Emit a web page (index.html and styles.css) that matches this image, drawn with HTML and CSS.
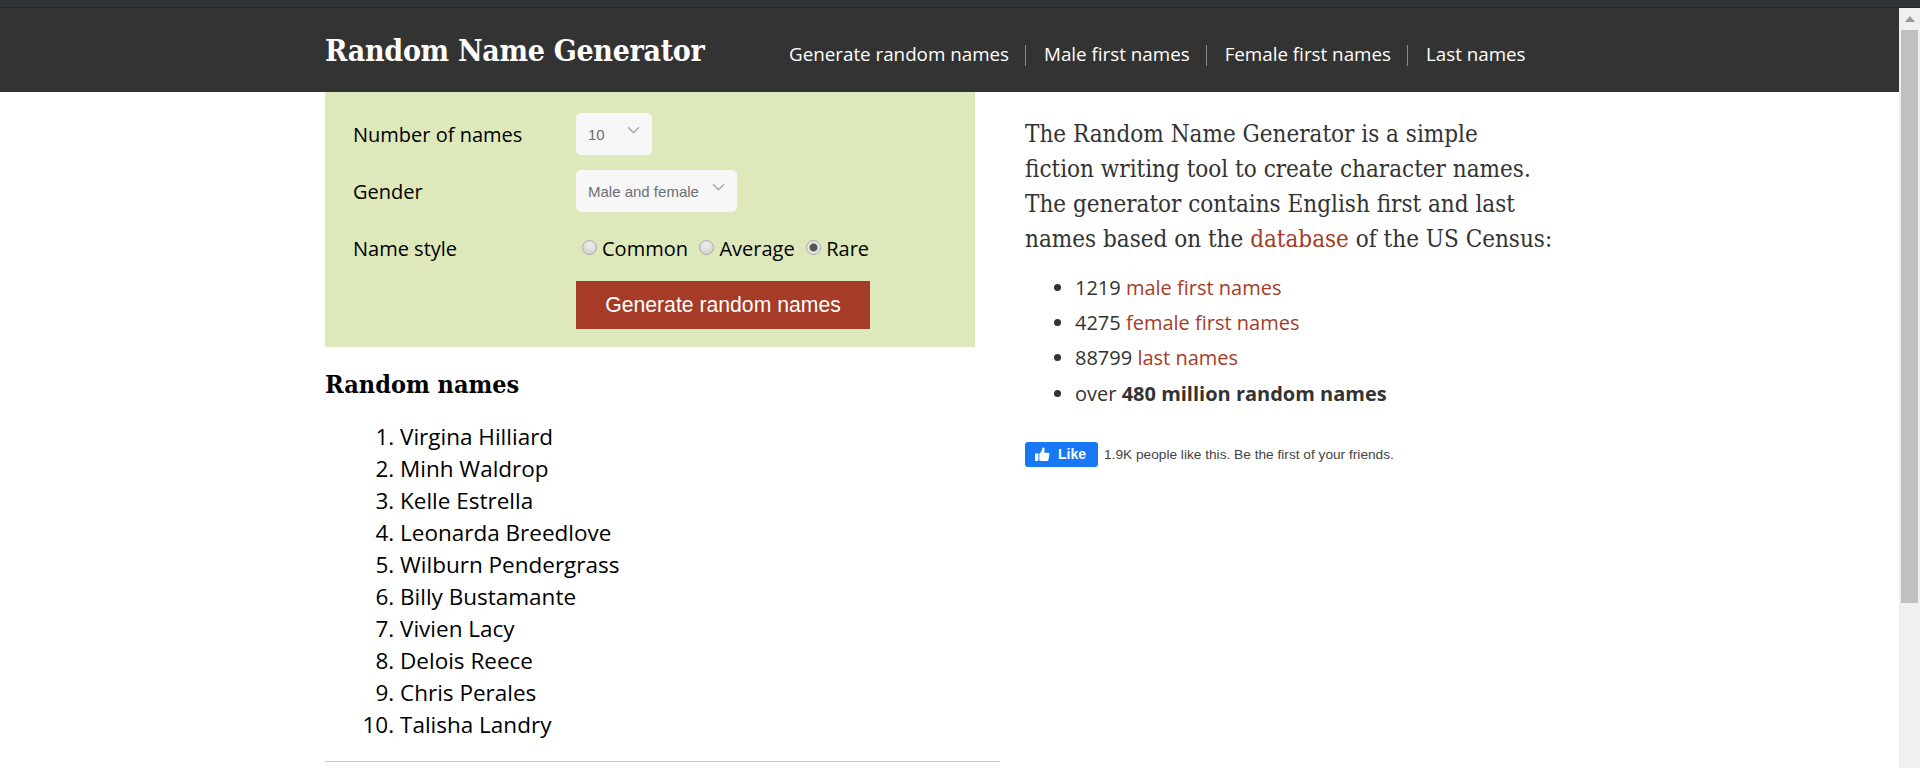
FILE: index.html
```html
<!DOCTYPE html>
<html lang="en">
<head>
<meta charset="utf-8">
<title>Random Name Generator</title>
<link rel="stylesheet" href="styles.css">
</head>
<body>
<div class="topstrip"></div>
<div class="window">
  <div class="page">
    <header class="site-header">
      <div class="wrap header-row">
        <h1 class="brand">Random Name Generator</h1>
        <nav class="nav">
          <a href="#">Generate random names</a>
          <a href="#">Male first names</a>
          <a href="#">Female first names</a>
          <a href="#">Last names</a>
        </nav>
      </div>
    </header>
    <main class="wrap columns">
      <section class="left">
        <form class="panel">
          <label class="lbl">Number of names</label>
          <div class="ctl">
            <span class="selbox sel-a"><span class="seltext">10</span>
              <svg class="chev" viewBox="0 0 12 8"><path d="M1 1l5 5 5-5" fill="none" stroke="#aaa" stroke-width="1.4"/></svg></span>
          </div>
          <label class="lbl">Gender</label>
          <div class="ctl">
            <span class="selbox sel-b"><span class="seltext">Male and female</span>
              <svg class="chev" viewBox="0 0 12 8"><path d="M1 1l5 5 5-5" fill="none" stroke="#aaa" stroke-width="1.4"/></svg></span>
          </div>
          <label class="lbl">Name style</label>
          <div class="ctl radios">
            <label class="radio r1"><input type="radio" name="style">Common</label>
            <label class="radio r2"><input type="radio" name="style">Average</label>
            <label class="radio"><input type="radio" name="style" checked>Rare</label>
          </div>
          <div></div>
          <button type="button" class="go">Generate random names</button>
        </form>
        <h3 class="names-title">Random names</h3>
        <ol class="names">
          <li>Virgina Hilliard</li>
          <li>Minh Waldrop</li>
          <li>Kelle Estrella</li>
          <li>Leonarda Breedlove</li>
          <li>Wilburn Pendergrass</li>
          <li>Billy Bustamante</li>
          <li>Vivien Lacy</li>
          <li>Delois Reece</li>
          <li>Chris Perales</li>
          <li>Talisha Landry</li>
        </ol>
        <hr class="rule">
      </section>
      <aside class="right">
        <p class="intro"><span class="line">The Random Name Generator is a simple</span><span class="line">fiction writing tool to create character names.</span><span class="line">The generator contains English first and last</span><span class="line">names based on the <a href="#">database</a> of the US Census:</span></p>
        <ul class="facts">
          <li>1219 <a href="#">male first names</a></li>
          <li>4275 <a href="#">female first names</a></li>
          <li>88799 <a href="#">last names</a></li>
          <li>over <b>480 million random names</b></li>
        </ul>
        <div class="fb">
          <span class="fb-btn">
            <svg class="thumb" viewBox="0 0 16 16"><path d="M0 7h3.6v8H0zM4.6 7.2c1.500-1 2.700-2.900 3-5 .1-1 .5-1.700 1.200-1.700 1.200 0 1.700 1.300 1.500 2.800l-.5 2.700h4.100c1 0 1.600.7 1.500 1.500l-1 6c-.1.800-.8 1.500-1.700 1.500H7c-.9 0-1.700-.3-2.400-.8z" fill="#fff"/></svg>
            <span>Like</span>
          </span>
          <span class="fb-text">1.9K people like this. Be the first of your friends.</span>
        </div>
      </aside>
    </main>
  </div>
  <div class="scrollbar">
    <div class="sb-btn"><svg viewBox="0 0 10 6" class="sb-arrow"><path d="M5 0l5 6H0z" fill="#999"/></svg></div>
    <div class="sb-thumb"></div>
  </div>
</div>
</body>
</html>
```
FILE: styles.css
```css
* { box-sizing: border-box; }
html, body { margin: 0; height: 100%; overflow: hidden; background: #fff; }
body { font-family: "Open Sans", sans-serif; color: #000; display: flex; flex-direction: column; }
a { text-decoration: none; }

.topstrip { height: 8px; background: #2f3538; border-bottom: 1px solid #26292b; flex: none; }
.window { flex: 1; display: flex; min-height: 0; }
.page { flex: 1; min-width: 0; overflow: hidden; }

.scrollbar { width: 21px; background: #f0f0f0; flex: none; }
.sb-btn { height: 22px; display: flex; align-items: center; justify-content: center; }
.sb-arrow { width: 10px; height: 6px; }
.sb-thumb { width: 17px; height: 573px; margin-left: 2px; background: #c0c0c0; }

.wrap { width: 1574px; padding-left: 325px; }
.site-header { height: 84px; background: #333; }
.header-row { display: flex; align-items: center; height: 100%; }
.brand { margin: 0; width: 464px; font-family: "DejaVu Serif", serif; font-stretch: condensed; font-weight: 700; font-size: 30px; color: #fff; letter-spacing: -.3px; white-space: nowrap; }
.nav { display: flex; font-size: 18.8px; padding-top: 8px; }
.nav a { color: #fff; white-space: nowrap; padding-right: 17px; margin-right: 18px; position: relative; }
.nav a:not(:last-child)::after { content: ""; position: absolute; right: 0; top: 4px; height: 21px; width: 1px; background: #8a8a8a; }

.columns { display: flex; }
.left { width: 675px; flex: none; }
.panel { width: 650px; height: 255px; background-color: #dde8bb; background-image: radial-gradient(circle, #d9e7bb 0 .5px, transparent .8px); background-size: 8px 8px; padding: 21px 0 18px 28px; display: grid; grid-template-columns: 223px 1fr; grid-template-rows: 42px 42px 42px 48px; row-gap: 15px; align-items: center; }
.lbl { font-size: 20px; color: #000; }
.ctl { display: flex; }
.selbox { height: 42px; background: #f7f7f7; border-radius: 5px; position: relative; display: flex; align-items: center; padding-left: 12px; font-family: "Liberation Sans", sans-serif; font-size: 15px; color: #6b6f76; }
.sel-a { width: 76px; }
.sel-b { width: 161px; }
.chev { position: absolute; right: 12px; top: 13px; width: 13px; height: 9px; }
.radios { align-items: center; font-size: 20px; padding-left: 6px; gap: 11.5px; }
.radio { display: flex; align-items: center; }
.radio input { appearance: none; margin: 0 5px 2px 0; width: 15px; height: 15px; border-radius: 50%; border: 1px solid #aaa; background: radial-gradient(circle at 50% 30%, #f0f0f0, #ccc); }
.radio input:checked { background: radial-gradient(circle, #555 0 3.5px, #e6e6e6 4.5px); }
.go { width: 294px; height: 48px; border: 0; background: #a63c28; color: #fff; font-family: "Liberation Sans", sans-serif; font-size: 21.2px; padding: 0; position: relative; top: -3px; }

.names-title { margin: 21px 0 0; font-family: "DejaVu Serif", serif; font-stretch: condensed; font-size: 25px; font-weight: 700; line-height: 34px; color: #000; }
.names { margin: 19px 0 0; padding: 0 0 0 75px; font-size: 22.5px; line-height: 32px; }
.rule { margin: 20px 0 0; border: 0; border-top: 1px solid #ccc; }

.right { width: 540px; flex: none; margin-left: 25px; margin-top: 25px; color: #333; }
.intro { margin: 0; font-family: "DejaVu Serif", serif; font-stretch: condensed; font-size: 24px; line-height: 35px; }
.line { display: block; white-space: nowrap; }
.intro a, .facts a { color: #a63c28; }
.facts { margin: 13px 0 0; padding: 0 0 0 50px; font-size: 20px; line-height: 35.2px; }
.fb { display: flex; align-items: center; margin-top: 31px; }
.fb-btn { width: 73px; height: 25px; background: #1877f2; border-radius: 3px; color: #fff; font-family: "Liberation Sans", sans-serif; font-weight: 700; font-size: 14px; display: flex; align-items: center; padding-left: 10px; gap: 8px; }
.thumb { width: 15px; height: 15px; }
.fb-text { margin-left: 6px; font-family: "Liberation Sans", sans-serif; font-size: 13.7px; color: #444; white-space: nowrap; }
```
